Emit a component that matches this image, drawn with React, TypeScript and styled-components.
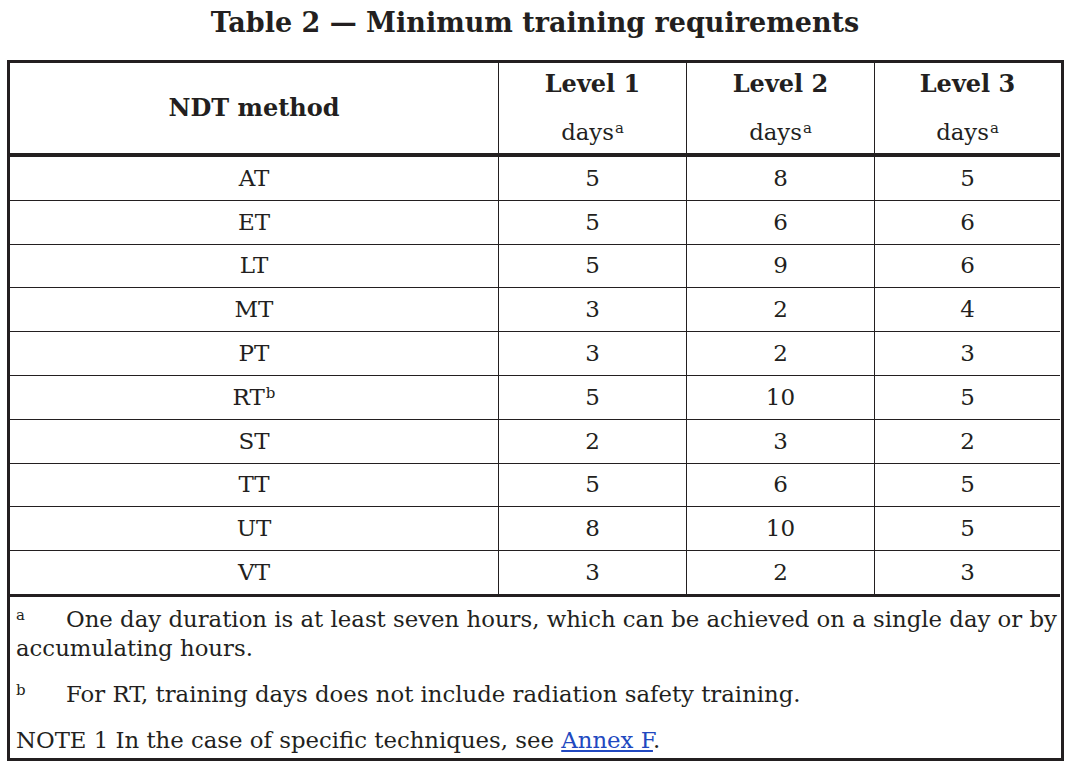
import React from 'react'
import styled, { createGlobalStyle } from 'styled-components'

const GlobalStyle = createGlobalStyle`
  html, body {
    margin: 0;
    padding: 0;
    background: #ffffff;
  }
  body {
    font-family: "DejaVu Serif", "Liberation Serif", serif;
    color: #231f20;
  }
  * {
    box-sizing: border-box;
  }
`

const Page = styled.div`
  width: 1070px;
  height: 768px;
  overflow: hidden;
`

const Title = styled.h1`
  margin: 0;
  height: 60px;
  padding-top: 3px;
  line-height: 40px;
  font-size: 27px;
  font-weight: bold;
  text-align: center;
`

const Frame = styled.div`
  width: 1057px;
  margin-left: 7px;
  border: 3px solid #231f20;
`

const Grid = styled.div`
  display: grid;
  grid-template-columns: 489px 188px 188px 185px;
`

const Cell = styled.div<{ $head?: boolean; $last?: boolean; $edge?: boolean }>`
  display: flex;
  flex-direction: column;
  align-items: center;
  justify-content: center;
  height: ${p => (p.$head ? '94px' : p.$last ? '45.8px' : '43.8px')};
  border-right: ${p => (p.$edge ? 'none' : '1px solid #231f20')};
  border-bottom: ${p => (p.$head ? '4px' : p.$last ? '3px' : '1px')} solid #231f20;
  font-size: 23px;
  line-height: 1;
  text-align: center;
`

const HeadLabel = styled.div`
  font-weight: bold;
  font-size: 24px;
`

const LevelCell = styled(Cell)`
  justify-content: flex-start;
  gap: 6px;
`

const LevelLine = styled.div<{ $bold?: boolean }>`
  height: 42px;
  line-height: 42px;
  font-size: ${p => (p.$bold ? '24px' : '22.8px')};
  font-weight: ${p => (p.$bold ? 'bold' : 'normal')};
`

const Sup = styled.span`
  display: inline-block;
  font-size: 15px;
  line-height: 1;
  vertical-align: baseline;
  position: relative;
  top: -7px;
  margin-left: 1px;
`

const Notes = styled.div`
  display: flex;
  flex-direction: column;
  gap: 17px;
  padding: 8px 0 3px 6px;
  font-size: 22.8px;
  line-height: 29px;
`

const Note = styled.p`
  margin: 0;
`

const NoteLine = styled.span`
  white-space: nowrap;
`

const Marker = styled.span`
  display: inline-block;
  width: 50px;
  font-size: 15px;
  line-height: 1;
  vertical-align: baseline;
  position: relative;
  top: -7px;
`

const Link = styled.a`
  color: #2148c0;
  text-decoration: underline;
`

const rows: [string, string, string, string, boolean?][] = [
  ['AT', '5', '8', '5'],
  ['ET', '5', '6', '6'],
  ['LT', '5', '9', '6'],
  ['MT', '3', '2', '4'],
  ['PT', '3', '2', '3'],
  ['RT', '5', '10', '5', true],
  ['ST', '2', '3', '2'],
  ['TT', '5', '6', '5'],
  ['UT', '8', '10', '5'],
  ['VT', '3', '2', '3'],
]

const levels = ['Level 1', 'Level 2', 'Level 3']

const App = () => (
  <Page>
    <GlobalStyle />
    <Title>Table 2 — Minimum training requirements</Title>
    <Frame>
      <Grid>
        <Cell $head>
          <HeadLabel>NDT method</HeadLabel>
        </Cell>
        {levels.map((l, i) => (
          <LevelCell key={l} $head $edge={i === 2}>
            <LevelLine $bold>{l}</LevelLine>
            <LevelLine>
              days<Sup>a</Sup>
            </LevelLine>
          </LevelCell>
        ))}
        {rows.map(([m, a, b, c, note], i) => {
          const last = i === rows.length - 1
          return (
            <React.Fragment key={m}>
              <Cell $last={last}>
                <span>
                  {m}
                  {note && <Sup>b</Sup>}
                </span>
              </Cell>
              <Cell $last={last}>{a}</Cell>
              <Cell $last={last}>{b}</Cell>
              <Cell $last={last} $edge>
                {c}
              </Cell>
            </React.Fragment>
          )
        })}
      </Grid>
      <Notes>
        <Note>
          <Marker>a</Marker>
          <NoteLine>One day duration is at least seven hours, which can be achieved on a single day or by</NoteLine>
          <br />
          <NoteLine>accumulating hours.</NoteLine>
        </Note>
        <Note>
          <Marker>b</Marker>For RT, training days does not include radiation safety training.
        </Note>
        <Note>
          NOTE 1 In the case of specific techniques, see <Link href="#">Annex F</Link>.
        </Note>
      </Notes>
    </Frame>
  </Page>
)

export default App
